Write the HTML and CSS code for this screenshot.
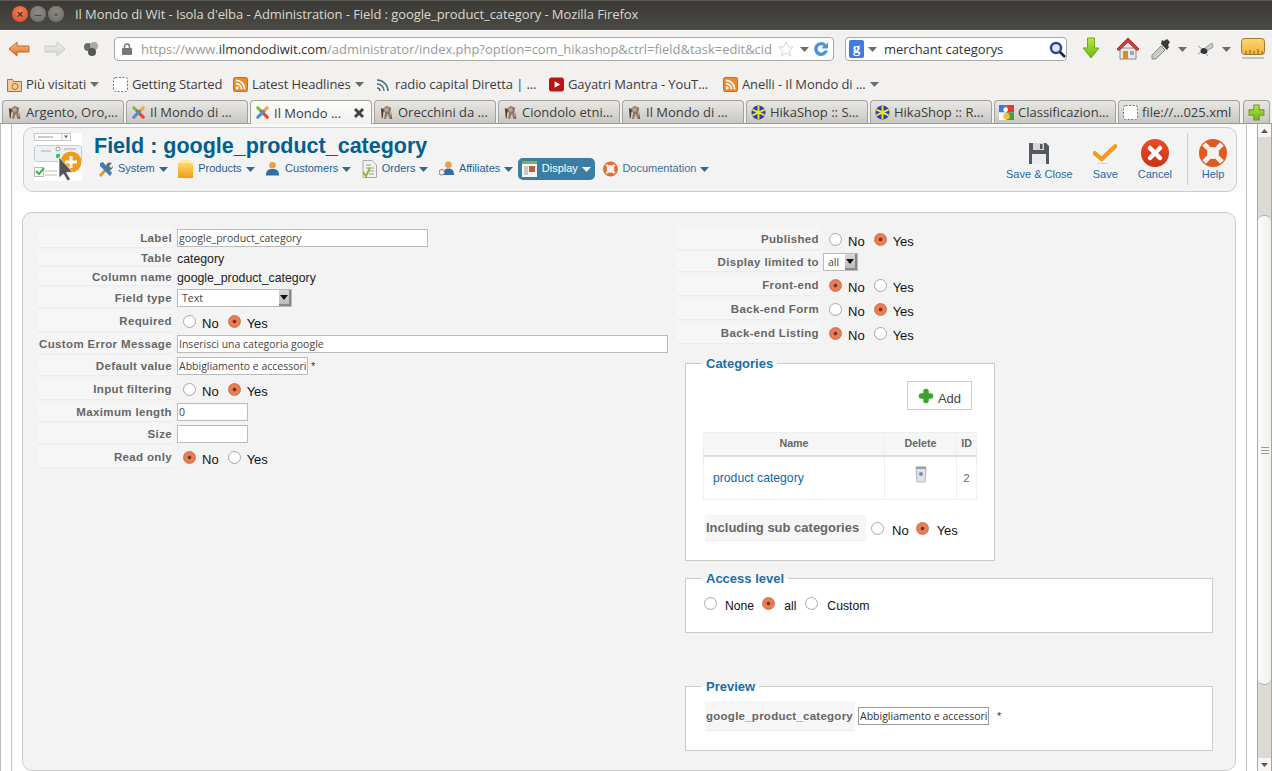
FILE: index.html
```html
<!DOCTYPE html>
<html lang="it">
<head>
<meta charset="utf-8">
<title>Il Mondo di Wit - Isola d'elba - Administration - Field : google_product_category</title>
<link rel="stylesheet" href="styles.css">
</head>
<body>
<svg class="defs" aria-hidden="true">
  <defs>
    <linearGradient id="gOrange" x1="0" y1="0" x2="0" y2="1"><stop offset="0" stop-color="#f9c48a"/><stop offset="1" stop-color="#dc6a1e"/></linearGradient>
    <linearGradient id="gGrey" x1="0" y1="0" x2="0" y2="1"><stop offset="0" stop-color="#eeeeec"/><stop offset="1" stop-color="#d3d3d0"/></linearGradient>
    <linearGradient id="gGreen" x1="0" y1="0" x2="0" y2="1"><stop offset="0" stop-color="#b6ea4a"/><stop offset="1" stop-color="#6cb512"/></linearGradient>
    <linearGradient id="gBox" x1="0" y1="0" x2="0" y2="1"><stop offset="0" stop-color="#ffd76a"/><stop offset="1" stop-color="#f39c12"/></linearGradient>
    <linearGradient id="gRed" x1="0" y1="0" x2="0" y2="1"><stop offset="0" stop-color="#ee4a25"/><stop offset="1" stop-color="#c9331a"/></linearGradient>
    <linearGradient id="gRuler" x1="0" y1="0" x2="0" y2="1"><stop offset="0" stop-color="#fbd66f"/><stop offset="1" stop-color="#f2b63b"/></linearGradient>
    <symbol id="witch" viewBox="0 0 16 16"><path d="M8 1l5 2-1 5 1 7h-2l-1.500-6-2 6H5.500l1-7-3.500-1 1-3z" fill="#8d7765"/><path d="M2 3l3 2-1 9H3zM13 7l1 8h-1z" fill="#5d3a28"/><path d="M6 3h4v4H6z" fill="#b8a897"/></symbol>
    <symbol id="joomla" viewBox="0 0 16 16"><g fill="none" stroke-width="3.400" stroke-linecap="round"><path d="M3 3l6 6" stroke="#7ac143"/><path d="M13 3L7 9" stroke="#f9a541"/><path d="M13 13L7 7" stroke="#f44321"/><path d="M3 13l6-6" stroke="#5091cd"/></g></symbol>
    <symbol id="hika" viewBox="0 0 16 16"><circle cx="8" cy="8" r="7.500" fill="#2c3fb8"/><path d="M8 1v14M1.500 5l13 6M14.500 5l-13 6" stroke="#f2e62d" stroke-width="2"/></symbol>
    <symbol id="goog" viewBox="0 0 16 16"><path d="M0 0h8v8H0z" fill="#3b78e7"/><path d="M8 0h8v8H8z" fill="#e53a2e"/><path d="M0 8h8v8H0z" fill="#fff"/><path d="M8 8h8v8H8z" fill="#2fa84f"/><circle cx="8" cy="12" r="3.500" fill="#f6c12c"/><circle cx="7" cy="5" r="2.500" fill="#fff"/></symbol>
    <symbol id="dash" viewBox="0 0 15 15"><rect x=".5" y=".5" width="14" height="14" rx="2" fill="#fff" stroke="#777" stroke-dasharray="2 1.500"/></symbol>
    <symbol id="rss" viewBox="0 0 16 16"><rect x=".5" y=".5" width="15" height="15" rx="2" fill="#f08a24" stroke="#c8641a"/><circle cx="4.500" cy="11.500" r="1.700" fill="#fff"/><path d="M3 7a6 6 0 0 1 6 6M3 3.500A9.500 9.500 0 0 1 12.500 13" stroke="#fff" stroke-width="1.800" fill="none"/></symbol>
    <symbol id="caretd" viewBox="0 0 9 5"><path d="M0 0h9L4.500 5z"/></symbol>
  </defs>
</svg>

<header class="titlebar">
  <div class="wbtns">
    <span class="wbtn wclose">×</span><span class="wbtn wmin">–</span><span class="wbtn wmax">▫</span>
  </div>
  <div class="wtitle">Il Mondo di Wit - Isola d'elba - Administration - Field : google_product_category - Mozilla Firefox</div>
</header>

<nav class="nav">
  <svg class="ic-back" viewBox="0 0 22 16"><path d="M9 1L1 8l8 7v-4h12V5H9z" fill="url(#gOrange)" stroke="#c96a22"/></svg>
  <svg class="ic-forward" viewBox="0 0 22 16"><path d="M13 1l8 7-8 7v-4H1V5h12z" fill="url(#gGrey)" stroke="#c9c9c6"/></svg>
  <svg class="ic-cluster" viewBox="0 0 16 16"><circle cx="5" cy="6" r="4" fill="#6a6a68"/><circle cx="11" cy="5" r="4" fill="#a9a9a7"/><circle cx="9" cy="11" r="4" fill="#555553"/></svg>
  <div class="urlbar">
    <svg class="ic-lock" viewBox="0 0 10 12"><path d="M2.500 5V3.500a2.500 2.500 0 0 1 5 0V5" fill="none" stroke="#777" stroke-width="1.500"/><rect y="5" width="10" height="7" rx="1" fill="#777"/></svg>
    <div class="urltext">https://www.<b>ilmondodiwit.com</b>/administrator/index.php?option=com_hikashop&amp;ctrl=field&amp;task=edit&amp;cid</div>
    <svg class="ic-star" viewBox="0 0 16 16"><path d="M8 1l2.100 4.700 5.100.5-3.900 3.400 1.200 5L8 12l-4.500 2.600 1.200-5L.8 6.200l5.100-.5z" fill="#fff" stroke="#d4d4d2"/></svg>
    <svg class="caret c-url"><use href="#caretd"/></svg>
    <svg class="ic-reload" viewBox="0 0 16 16"><path d="M13.500 3.500A7 7 0 1 0 15 9.500h-3.500A3.600 3.600 0 1 1 10.500 5L8.500 7.500H15V1z" fill="#4f93d6"/></svg>
  </div>
  <div class="searchbar">
    <svg class="ic-g" viewBox="0 0 15 18"><rect width="15" height="18" rx="2" fill="#3f7be0"/><text x="7.500" y="13" class="g-letter">g</text></svg>
    <svg class="caret c-search"><use href="#caretd"/></svg>
    <div class="searchtext">merchant categorys</div>
    <svg class="ic-mag" viewBox="0 0 17 17"><circle cx="7" cy="7" r="5" fill="#dfe8f7" stroke="#2a4a9c" stroke-width="2.500"/><path d="M11 11l5 5" stroke="#222" stroke-width="2.500"/></svg>
  </div>
  <svg class="ic-down" viewBox="0 0 18 24"><path d="M5.500 1h7v10H17l-8 10-8-10h4.500z" fill="url(#gGreen)" stroke="#6fa81a"/></svg>
  <svg class="ic-home" viewBox="0 0 24 24"><path d="M4 11h16v11H4z" fill="#e9e9e6" stroke="#8a8a86"/><path d="M1 12L12 1l11 11-2 1.500L12 5l-9 8.500z" fill="#d0433a" stroke="#a22b24"/><path d="M7 14h5v8H7z" fill="#d68a2a"/><path d="M14 14h4v4h-4z" fill="#8fa8c4"/></svg>
  <svg class="ic-drop" viewBox="0 0 22 22"><path d="M2 17l9-9 4 4-9 9H2z" fill="#c9c9c6" stroke="#8b8b88"/><path d="M11 6l6 6 2-3-1-2 2-3-3-3-3 2-2-1z" fill="#3a3a38"/></svg>
  <svg class="caret c-drop"><use href="#caretd"/></svg>
  <svg class="ic-bug" viewBox="0 0 17 14"><ellipse cx="7" cy="9" rx="3.500" ry="3" fill="#333"/><path d="M8 6l7-5 1 4-5 3zM5 7L1 4M4 10l-3 2M9 12l2 2" stroke="#999" fill="#cfcfcc"/></svg>
  <svg class="caret c-bug"><use href="#caretd"/></svg>
  <svg class="ic-ruler" viewBox="0 0 24 22"><rect x=".5" y=".5" width="23" height="16" rx="3" fill="url(#gRuler)" stroke="#a07a24"/><path d="M5 16v-3M9 16v-4M13 16v-3M17 16v-5M21 16v-3" stroke="#7d5f1a"/><path d="M1 20h22" stroke="#c5c5c2" stroke-width="2"/></svg>
</nav>

<div class="bookmarks">
  <div class="bm"><svg class="fav" viewBox="0 0 15 15"><path d="M.5 2.500h5l1 2h8v10H.5z" fill="#f2c99a" stroke="#c06a28"/><circle cx="8" cy="9.500" r="3" fill="none" stroke="#c06a28"/></svg><span>Più visitati</span><svg class="caret"><use href="#caretd"/></svg></div>
  <div class="bm"><svg class="fav"><use href="#dash"/></svg><span>Getting Started</span></div>
  <div class="bm"><svg class="fav"><use href="#rss"/></svg><span>Latest Headlines</span><svg class="caret"><use href="#caretd"/></svg></div>
  <div class="bm"><svg class="fav" viewBox="0 0 15 15"><path d="M1 3a11 11 0 0 1 11 11M1 7a7 7 0 0 1 7 7M1 11a3 3 0 0 1 3 3" fill="none" stroke="#4d6f7d" stroke-width="1.500"/></svg><span>radio capital Diretta | ...</span></div>
  <div class="bm"><svg class="fav" viewBox="0 0 16 15"><rect width="16" height="15" rx="3" fill="#b81414"/><path d="M6 4l6 3.500L6 11z" fill="#fff"/></svg><span>Gayatri Mantra - YouT...</span></div>
  <div class="bm"><svg class="fav"><use href="#rss"/></svg><span>Anelli - Il Mondo di ...</span><svg class="caret"><use href="#caretd"/></svg></div>
</div>

<div class="tabs">
  <div class="tab"><svg class="fav"><use href="#witch"/></svg><span>Argento, Oro,...</span></div>
  <div class="tab"><svg class="fav"><use href="#joomla"/></svg><span>Il Mondo di ...</span></div>
  <div class="tab tab-active"><svg class="fav"><use href="#joomla"/></svg><span>Il Mondo ...</span><svg class="ic-close" viewBox="0 0 12 12"><path d="M2 2l8 8M10 2l-8 8" stroke="#444" stroke-width="3"/></svg></div>
  <div class="tab"><svg class="fav"><use href="#witch"/></svg><span>Orecchini da ...</span></div>
  <div class="tab"><svg class="fav"><use href="#witch"/></svg><span>Ciondolo etni...</span></div>
  <div class="tab"><svg class="fav"><use href="#witch"/></svg><span>Il Mondo di ...</span></div>
  <div class="tab"><svg class="fav"><use href="#hika"/></svg><span>HikaShop :: S...</span></div>
  <div class="tab"><svg class="fav"><use href="#hika"/></svg><span>HikaShop :: R...</span></div>
  <div class="tab"><svg class="fav"><use href="#goog"/></svg><span>Classificazion...</span></div>
  <div class="tab"><svg class="fav"><use href="#dash"/></svg><span>file://...025.xml</span></div>
  <div class="tab tab-new"><svg class="ic-plus" viewBox="0 0 16 16"><path d="M5.500 1h5v4.500H15v5h-4.500V15h-5v-4.500H1v-5h4.500z" fill="url(#gGreen)" stroke="#6f9a28"/></svg></div>
</div>

<div class="viewport">
  <div class="frame">
    <div class="toolbar-band">
      <div class="toolbar">
        <svg class="ic-field" viewBox="0 0 48 48">
          <rect width="48" height="48" fill="#fff"/>
          <rect x=".5" y=".5" width="36" height="7" fill="#fff" stroke="#c8c8c8"/><path d="M4 4h15" stroke="#999"/><path d="M28 1v6" stroke="#c8c8c8"/><path d="M30 2.500h4l-2 3z" fill="#666"/>
          <rect x=".5" y="12.500" width="47" height="16" rx="2" fill="#eef1f3" stroke="#ccc"/><path d="M7 18h10M30 16h12" stroke="#aaa"/><circle cx="24" cy="16" r="2" fill="#fff" stroke="#999"/><circle cx="24" cy="23" r="2.200" fill="#3cc34a"/>
          <rect x=".5" y="34.500" width="9" height="9" fill="#fff" stroke="#bbb"/><path d="M2 38l3 3 5-6" fill="none" stroke="#3ab54a" stroke-width="2"/><path d="M11 38h12M11 42h12" stroke="#bbb"/>
          <circle cx="37" cy="29" r="10.500" fill="#f29a1a"/><path d="M37 23v12M31 29h12" stroke="#fff" stroke-width="3"/>
          <path d="M25 24v21l4.500-4 4 7 3-1.500-4-7 6-.5z" fill="#555" stroke="#fff" stroke-width=".7"/>
        </svg>
        <div class="tb-main">
          <h1 class="tb-title">Field : google_product_category</h1>
          <ul class="menu">
            <li class="mi"><svg class="mic" viewBox="0 0 15 16"><path d="M1 14L10 4l2 2-9 10z" fill="#e8912d"/><path d="M2 2l3-1 9 11-2 3L2 5z" fill="#3e7fb5"/><path d="M8 5a4 4 0 0 1 6-3l-3 3 2 2 2-2a4 4 0 0 1-5 4z" fill="#5a6f80"/></svg><span>System</span><svg class="caret"><use href="#caretd"/></svg></li>
            <li class="mi"><svg class="mic mic-tall" viewBox="0 0 15 18"><path d="M1 3l2-3h9l2 3z" fill="#ffe9a8"/><rect x="0" y="3" width="15" height="15" fill="url(#gBox)"/></svg><span>Products</span><svg class="caret"><use href="#caretd"/></svg></li>
            <li class="mi"><svg class="mic" viewBox="0 0 16 16"><circle cx="8" cy="4" r="3.500" fill="#e9a03f"/><path d="M1 15c0-6 3-7 7-7s7 1 7 7z" fill="#2f6ea5"/></svg><span>Customers</span><svg class="caret"><use href="#caretd"/></svg></li>
            <li class="mi"><svg class="mic mic-tall" viewBox="0 0 15 18"><path d="M1 .5h9l4.500 4.500v12.500H1z" fill="#f2f2f0" stroke="#aaa"/><path d="M4 5h5M4 8h8M7 11h5M7 14h5" stroke="#999"/><path d="M1 12l3 4 4-8" fill="none" stroke="#8cbf2c" stroke-width="2"/></svg><span>Orders</span><svg class="caret"><use href="#caretd"/></svg></li>
            <li class="mi"><svg class="mic" viewBox="0 0 16 17"><circle cx="10" cy="4" r="3.500" fill="#e9a03f"/><path d="M5 15c0-6 2-7 5-7s6 1 6 7z" fill="#2f6ea5"/><circle cx="3" cy="12" r="3" fill="#eee" stroke="#777"/></svg><span>Affiliates</span><svg class="caret"><use href="#caretd"/></svg></li>
            <li class="mi mi-on"><svg class="mic" viewBox="0 0 15 16"><rect width="15" height="16" fill="#f5f5f2"/><rect width="15" height="3" fill="#79b35a"/><rect x="2" y="5" width="4" height="9" fill="#c8c8c4"/><rect x="7" y="5" width="6" height="6" fill="#d9552b"/><rect x="9" y="7" width="2" height="2" fill="#3a7ea3"/></svg><span>Display</span><svg class="caret"><use href="#caretd"/></svg></li>
            <li class="mi mi-doc"><svg class="mic" viewBox="0 0 16 16"><circle cx="8" cy="8" r="6" fill="none" stroke="#ea6a2b" stroke-width="4"/><path d="M3.500 3.500l3 3M12.500 3.500l-3 3M3.500 12.500l3-3M12.500 12.500l-3-3" stroke="#eee" stroke-width="2.500"/></svg><span>Documentation</span><svg class="caret"><use href="#caretd"/></svg></li>
          </ul>
        </div>
        <div class="actions">
          <a class="act act-sc"><svg class="aic" viewBox="0 0 24 24"><path d="M2 1h17l3 3v18H2z" fill="#55585c"/><rect x="6" y="1" width="11" height="7" fill="#d6d8da"/><rect x="13" y="2" width="2.500" height="5" fill="#55585c"/><rect x="5" y="12" width="14" height="10" fill="#e9ebed"/></svg><span>Save &amp; Close</span></a>
          <a class="act act-save"><svg class="aic" viewBox="0 0 28 24"><path d="M2 11l8 7L26 3" fill="none" stroke="#f39a24" stroke-width="5" stroke-linecap="round" stroke-linejoin="round"/><path d="M5 23h12" stroke="#ccc"/></svg><span>Save</span></a>
          <a class="act act-cancel"><svg class="aic-big" viewBox="0 0 28 28"><circle cx="14" cy="14" r="14" fill="url(#gRed)"/><path d="M9 9l10 10M19 9L9 19" stroke="#fff" stroke-width="4.500" stroke-linecap="round"/></svg><span>Cancel</span></a>
          <div class="tb-sep"></div>
          <a class="act act-help"><svg class="aic-big" viewBox="0 0 28 28"><circle cx="14" cy="14" r="10" fill="none" stroke="#e2591f" stroke-width="8"/><path d="M5 5l6 6M23 5l-6 6M5 23l6-6M23 23l-6-6" stroke="#f1f1f0" stroke-width="5"/></svg><span>Help</span></a>
        </div>
      </div>
    </div>

    <main class="panel">
      <section class="col-left">
        <div class="grid grid-left">
          <label class="lbl">Label</label><div class="val"><input class="txt w-250" value="google_product_category"></div>
          <label class="lbl">Table</label><div class="val plain">category</div>
          <label class="lbl">Column name</label><div class="val plain">google_product_category</div>
          <label class="lbl">Field type</label><div class="val"><div class="select w-115"><span>Text</span><i class="sel-btn"></i></div></div>
          <label class="lbl">Required</label><div class="val opts"><input type="radio" class="rd"><span>No</span><input type="radio" class="rd" checked><span>Yes</span></div>
          <label class="lbl">Custom Error Message</label><div class="val"><input class="txt w-491" value="Inserisci una categoria google"></div>
          <label class="lbl">Default value</label><div class="val"><input class="txt w-131" value="Abbigliamento e accessori"><span class="star">*</span></div>
          <label class="lbl">Input filtering</label><div class="val opts"><input type="radio" class="rd"><span>No</span><input type="radio" class="rd" checked><span>Yes</span></div>
          <label class="lbl">Maximum length</label><div class="val"><input class="txt w-71" value="0"></div>
          <label class="lbl">Size</label><div class="val"><input class="txt w-71" value=""></div>
          <label class="lbl">Read only</label><div class="val opts"><input type="radio" class="rd" checked><span>No</span><input type="radio" class="rd"><span>Yes</span></div>
        </div>
      </section>
      <section class="col-right">
        <div class="grid grid-right">
          <label class="lbl">Published</label><div class="val opts"><input type="radio" class="rd"><span>No</span><input type="radio" class="rd" checked><span>Yes</span></div>
          <label class="lbl">Display limited to</label><div class="val"><div class="select w-35"><span>all</span><i class="sel-btn"></i></div></div>
          <label class="lbl">Front-end</label><div class="val opts"><input type="radio" class="rd" checked><span>No</span><input type="radio" class="rd"><span>Yes</span></div>
          <label class="lbl">Back-end Form</label><div class="val opts"><input type="radio" class="rd"><span>No</span><input type="radio" class="rd" checked><span>Yes</span></div>
          <label class="lbl">Back-end Listing</label><div class="val opts"><input type="radio" class="rd" checked><span>No</span><input type="radio" class="rd"><span>Yes</span></div>
        </div>

        <fieldset class="fs fs-cat">
          <legend>Categories</legend>
          <div class="add-wrap"><a class="add"><svg class="add-ic" viewBox="0 0 16 16"><path d="M8 3.500v9M3.500 8h9" fill="none" stroke="#3aa52a" stroke-width="5.500" stroke-linecap="round"/></svg><span>Add</span></a></div>
          <table class="cats">
            <thead><tr><th class="c-name">Name</th><th class="c-del">Delete</th><th class="c-id">ID</th></tr></thead>
            <tbody><tr>
              <td class="c-link"><a>product category</a></td>
              <td class="c-trash"><svg class="trash" viewBox="0 0 12 17"><path d="M1 2h10l-1 14H2z" fill="#dfe3e6" stroke="#b4b8bb"/><rect x="1" y="0.500" width="10" height="2.500" fill="#9a9ea1"/><circle cx="6" cy="8" r="2" fill="#6e8fc4"/></svg></td>
              <td class="c-num">2</td>
            </tr></tbody>
          </table>
          <div class="sub">
            <label class="lbl lbl-sub">Including sub categories</label>
            <div class="opts"><input type="radio" class="rd"><span>No</span><input type="radio" class="rd" checked><span>Yes</span></div>
          </div>
        </fieldset>

        <fieldset class="fs fs-access">
          <legend>Access level</legend>
          <div class="access"><input type="radio" class="rd"><span>None</span><input type="radio" class="rd" checked><span>all</span><input type="radio" class="rd"><span>Custom</span></div>
        </fieldset>

        <fieldset class="fs fs-preview">
          <legend>Preview</legend>
          <div class="preview">
            <label class="lbl lbl-prev">google_product_category</label>
            <input class="txt txt-dark w-131" value="Abbigliamento e accessori"><span class="star star-prev">*</span>
          </div>
        </fieldset>
      </section>
    </main>
  </div>

  <aside class="scrollbar">
    <div class="sb-btn"><svg class="sb-arrow" viewBox="0 0 9 5"><path d="M0 5h9L4.500 0z"/></svg></div>
    <div class="sb-track sb-before"></div>
    <div class="sb-thumb"><i></i><i></i><i></i></div>
    <div class="sb-track sb-after"></div>
    <div class="sb-btn"><svg class="sb-arrow" viewBox="0 0 9 5"><path d="M0 0h9L4.500 5z"/></svg></div>
  </aside>
</div>
</body>
</html>
```

FILE: styles.css
```css
* { box-sizing: border-box; }
html, body { margin: 0; padding: 0; height: 771px; overflow: hidden; }
body { width: 1272px; background: #f2f1f0; font-family: "Open Sans", "Noto Sans", sans-serif; font-size: 13px; color: #3c3c3c; }
.defs { display: block; width: 0; height: 0; }
svg { display: block; flex: none; }

/* window title */
.titlebar { height: 30px; display: flex; align-items: center; background: linear-gradient(#3a3935, #4b4a45); border-top: 1px solid #5a5954; padding: 0 0 3px 12px; }
.wbtns { display: flex; gap: 2px; width: 63px; }
.wbtn { width: 16px; height: 16px; border-radius: 50%; font-size: 11px; line-height: 16px; text-align: center; color: #3a3935; font-family: "Liberation Sans", sans-serif; }
.wclose { background: radial-gradient(circle at 50% 35%, #f4835a, #d8431a); font-weight: bold; }
.wmin, .wmax { background: radial-gradient(circle at 50% 35%, #8c8b85, #6c6b66); }
.wtitle { color: #dbd8cf; font-size: 13px; letter-spacing: -0.08px; white-space: nowrap; }

/* nav */
.nav { height: 38px; display: flex; align-items: center; padding: 0 0 1px 8px; background: #f2f1f0; border-top: 1px solid #fff; }
.ic-back { width: 22px; height: 16px; }
.ic-forward { width: 22px; height: 16px; margin-left: 14px; }
.ic-cluster { width: 16px; height: 16px; margin-left: 17px; }
.urlbar { width: 720px; height: 24px; margin-left: 15px; display: flex; align-items: center; background: #fff; border: 1px solid #a9a9a6; border-radius: 4px; padding-left: 7px; }
.ic-lock { width: 10px; height: 12px; }
.urltext { width: 635px; margin-left: 9px; font-size: 13px; letter-spacing: -0.03px; color: #999; white-space: nowrap; overflow: hidden; }
.urltext b { font-weight: 400; color: #333; }
.ic-star { width: 16px; height: 16px; margin-left: 2px; }
.caret { width: 9px; height: 5px; fill: #6c6c6a; flex: none; }
.c-url { margin-left: 6px; }
.ic-reload { width: 16px; height: 16px; margin-left: 4px; }
.searchbar { width: 222px; height: 24px; margin-left: 11px; display: flex; align-items: center; background: #fff; border: 1px solid #a9a9a6; border-radius: 4px; padding-left: 3px; }
.ic-g { width: 15px; height: 18px; }
.g-letter { font: bold 15px "Liberation Serif", serif; fill: #fff; text-anchor: middle; }
.c-search { margin-left: 4px; }
.searchtext { width: 165px; margin-left: 7px; font-size: 13px; letter-spacing: -0.06px; color: #333; }
.ic-mag { width: 17px; height: 17px; }
.ic-down { width: 18px; height: 24px; margin-left: 15px; }
.ic-home { width: 24px; height: 24px; margin-left: 16px; }
.ic-drop { width: 22px; height: 22px; margin-left: 10px; }
.c-drop { margin-left: 6px; }
.ic-bug { width: 17px; height: 14px; margin-left: 10px; }
.c-bug { margin-left: 8px; }
.ic-ruler { width: 24px; height: 22px; margin-left: 10px; }

/* bookmarks */
.bookmarks { height: 32px; display: grid; grid-template-columns: 106px 120px 143px 173px 174px 160px; padding-left: 7px; align-items: center; background: #f2f1f0; letter-spacing: -0.1px; }
.bm { display: flex; align-items: center; white-space: nowrap; color: #3c3c3c; }
.bm .caret { margin-left: 4px; }
.fav { width: 15px; height: 15px; flex: none; margin-right: 4px; }

/* tabs */
.tabs { height: 24px; padding-left: 2px; display: flex; gap: 2px; background: #f2f1f0; border-bottom: 1px solid #9a9994; }
.tab { width: 122px; height: 23px; display: flex; align-items: center; padding-left: 4px; border: 1px solid #a3a29d; border-bottom: 0; border-radius: 4px 4px 0 0; background: linear-gradient(#e8e7e4, #c9c7c3); white-space: nowrap; color: #3c3c3c; }
.tab .fav { margin-right: 4px; }
.tab-active { background: linear-gradient(#fbfbfa, #f2f1f0); height: 24px; }
.ic-close { width: 12px; height: 12px; margin-left: auto; margin-right: 6px; }
.tab-new { width: 27px; padding-left: 4px; margin-left: 1px; }
.ic-plus { width: 17px; height: 17px; }

/* page */
.viewport { height: 647px; display: flex; background: #fff; border-left: 1px solid #bbb; }
.frame { width: 1237px; margin-left: 10px; background: #fff; overflow: hidden; border-left: 1px solid #c4c4c4; border-right: 1px solid #c4c4c4; }
.toolbar-band, .panel { font-family: "Liberation Sans", Arial, sans-serif; }
.toolbar-band { height: 68px; padding: 3px 9px 0 11px; background: #fafafa; }
.toolbar { height: 65px; display: flex; background: #f3f3f3; border: 1px solid #ccc; border-radius: 10px; }
.ic-field { width: 48px; height: 48px; margin: 5px 0 0 10px; }
.tb-main { margin-left: 12px; }
.tb-title { margin: 0; padding-top: 5px; height: 30px; font-size: 21.500px; line-height: 26px; font-weight: bold; color: #00608f; white-space: nowrap; }
.menu { list-style: none; margin: 0; padding: 0 0 0 4px; display: flex; gap: 10.500px; height: 22px; }
.mi { display: flex; align-items: center; height: 22px; font-size: 11px; color: #1f5f8f; }
.mi > span { margin-top: -2px; }
.mic { width: 15px; height: 16px; margin-right: 5px; }
.mic-tall { height: 18px; }
.mi .caret { margin-left: 4px; fill: #2c6c96; }
.mi-on { background: #3a7ea3; color: #fff; border-radius: 5px; padding: 0 4px; margin: 0 -2px 0 -6px; }
.mi-on .caret { fill: #fff; }
.mi-doc { color: #3a7099; }
.mi-doc .mic { margin-right: 4px; }
.actions { margin-left: auto; display: flex; align-items: flex-start; padding-right: 9px; }
.act { display: flex; flex-direction: column; align-items: center; color: #1c6ba8; font-size: 11px; white-space: nowrap; padding-top: 14px; }
.aic { width: 24px; height: 24px; margin-bottom: 2px; }
.aic-big { width: 28px; height: 28px; margin-top: -3px; margin-bottom: 1px; }
.act-save { margin-left: 20px; }
.act-cancel { margin-left: 20px; }
.tb-sep { width: 1px; height: 52px; background: #ccc; margin: 5px 11px 0 15px; }
.act-help { width: 28px; }

.panel { width: 1214px; height: 559px; margin: 20px 0 0 10px; padding: 15px 0 0 15px; display: flex; background: #f3f3f3; border: 1px solid #ccc; border-radius: 10px; }
.col-left { width: 639px; }
.col-right { width: 536px; }
.grid { display: grid; column-gap: 4px; row-gap: 2px; }
.grid-left { grid-template-columns: 135px 1fr; grid-template-rows: 20px 16px 18px 20px 22px 20px 20px 22px 20px 20px 22px; }
.grid-right { grid-template-columns: 143px 1fr; grid-template-rows: 22px 20px 22px 22px 22px; column-gap: 3px; }
.lbl { display: flex; align-items: center; justify-content: flex-end; padding-right: 1px; background: #f6f6f6; border-bottom: 1px solid #ececec; font-size: 11.500px; letter-spacing: .35px; font-weight: bold; color: #666; white-space: nowrap; }
.val { display: flex; align-items: center; font-size: 12.300px; color: #222; }
.plain { padding-top: 1px; }
.txt { height: 18px; padding: 0 1px; border: 1px solid #bbb; background: #fff; font-family: "Open Sans", "Noto Sans", sans-serif; font-size: 10.500px; color: #444; }
.txt-dark { border-color: #999; color: #333; }
.w-250 { width: 251px; }
.w-491 { width: 491px; }
.w-131 { width: 131px; }
.w-71 { width: 71px; }
.select { height: 18px; display: flex; align-items: center; justify-content: space-between; padding-left: 4px; border: 1px solid #bbb; background: #fff; font-family: "Open Sans", "Noto Sans", sans-serif; font-size: 10.500px; color: #444; }
.w-115 { width: 115px; }
.w-35 { width: 35px; }
.sel-btn { width: 12px; height: 16px; background: linear-gradient(#d9d8d5, #bdbcb8); border-right: 2px solid #888; border-bottom: 2px solid #888; display: flex; align-items: center; justify-content: center; }
.sel-btn::before { content: ""; border: 4px solid transparent; border-top: 5px solid #111; border-bottom: 0; }
.star { margin-left: 3px; font-size: 11px; color: #333; }
.opts { display: flex; align-items: center; font-size: 13px; color: #111; }
.opts > span { margin: 4px 9px 0 6px; }
.opts > span:last-child { margin-right: 0; }
.rd { appearance: none; -webkit-appearance: none; width: 13px; height: 13px; margin: 0; border-radius: 50%; border: 1px solid #aaa; background: radial-gradient(circle at 50% 35%, #fff 60%, #e8e8e8); flex: none; }
.rd:checked { border-color: #d0744c; background: radial-gradient(circle, #6b3a28 0, #6b3a28 1.600px, #ee8259 2.300px, #e56f44); }
.val.opts { padding-left: 6px; }

.fs { margin: 0 0 0 8px; padding: 0; width: 528px; background: #fff; border: 1px solid #ccc; min-width: 0; }
.fs legend { margin-left: 16px; padding: 0 4px; font-size: 13px; line-height: 15px; font-weight: bold; color: #1b6ca8; }
.fs-cat { width: 310px; height: 205px; margin-top: 12px; }
.fs-access { height: 62px; margin-top: 10px; }
.fs-preview { height: 72px; margin-top: 46px; }
.add-wrap { display: flex; justify-content: flex-end; padding: 10px 22px 0 0; }
.add { width: 65px; height: 29px; display: flex; align-items: center; justify-content: center; border: 1px solid #ccc; background: #fff; font-size: 13px; color: #444; }
.add > span { margin-top: 6px; }
.add-ic { width: 16px; height: 16px; margin-right: 4px; }
.cats { width: 274px; margin: 22px 0 0 17px; border-collapse: collapse; table-layout: fixed; }
.cats th { height: 23px; padding: 0 0 2px; background: #f6f6f6; border: 1px solid #efefef; border-bottom: 2px solid #ddd; font-size: 10.700px; font-weight: bold; color: #666; }
.cats td { height: 44px; padding: 0; border: 1px solid #efefef; }
.c-name { width: 181px; }
.c-del { width: 72px; }
.c-link { padding-left: 9px !important; font-size: 12.200px; color: #0b66ad; }
.trash { width: 12px; height: 17px; margin: -6px auto 0; }
.c-num { font-size: 11px; color: #666; text-align: center; }
.sub { display: flex; align-items: center; margin: 15px 0 0 19px; }
.lbl-sub { width: 161px; height: 26px; justify-content: flex-start; padding-left: 1px; font-size: 13px; letter-spacing: 0; }
.sub .opts { margin-left: 5px; }
.sub .opts > span { margin: 4px 7px 0 8px; }
.access { display: flex; align-items: center; height: 14px; margin: 10px 0 0 18px; font-size: 12.200px; color: #111; }
.access span { margin: 5px 8px 0 8px; }
.access span + input + span { margin-left: 9px; margin-right: 9px; }
.preview { display: flex; align-items: center; margin: 7px 0 0 19px; }
.lbl-prev { width: 150px; height: 30px; padding-right: 2px; letter-spacing: .25px; }
.preview .txt { margin-left: 3px; }
.star-prev { margin-left: 8px; }

/* scrollbar */
.scrollbar { width: 13px; margin-left: 10px; display: flex; flex-direction: column; border-left: 1px solid #aaa; border-right: 1px solid #a8a6a0; background: #dcdad5; box-sizing: content-box; }
.sb-btn { height: 13px; flex: none; display: flex; align-items: center; justify-content: center; background: #f6f5f4; }
.sb-arrow { width: 7px; height: 4px; fill: #555; }
.sb-before { height: 78px; flex: none; border-radius: 5px 5px 0 0; }
.sb-after { flex: 1; }
.sb-thumb { height: 470px; flex: none; display: flex; flex-direction: column; align-items: center; justify-content: center; gap: 2px; background: linear-gradient(90deg, #fbfbfa, #f0efed); border: 1px solid #b0aea9; border-width: 1px 0; border-radius: 6px; }
.sb-thumb i { width: 8px; height: 1px; background: #9a9994; }
```
